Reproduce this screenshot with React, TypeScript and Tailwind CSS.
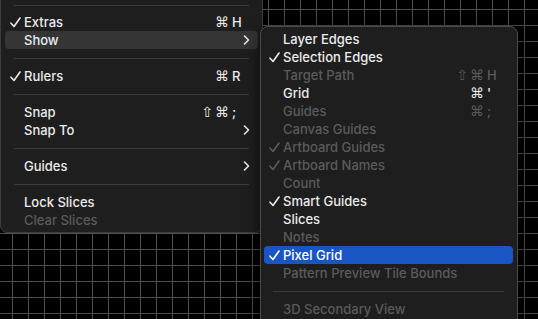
import React from 'react'

type Item =
  | { sep: true }
  | {
      sep?: false
      label: string
      check?: boolean
      disabled?: boolean
      mods?: string
      keyChar?: string
      sub?: boolean
      active?: 'gray' | 'blue'
    }

const mainItems: Item[] = [
  { label: 'Extras', check: true, mods: '⌘', keyChar: 'H' },
  { label: 'Show', sub: true, active: 'gray' },
  { sep: true },
  { label: 'Rulers', check: true, mods: '⌘', keyChar: 'R' },
  { sep: true },
  { label: 'Snap', mods: '⇧⌘', keyChar: ';' },
  { label: 'Snap To', sub: true },
  { sep: true },
  { label: 'Guides', sub: true },
  { sep: true },
  { label: 'Lock Slices' },
  { label: 'Clear Slices', disabled: true },
]

const showItems: Item[] = [
  { label: 'Layer Edges' },
  { label: 'Selection Edges', check: true },
  { label: 'Target Path', disabled: true, mods: '⇧⌘', keyChar: 'H' },
  { label: 'Grid', mods: '⌘', keyChar: "'" },
  { label: 'Guides', disabled: true, mods: '⌘', keyChar: ';' },
  { label: 'Canvas Guides', disabled: true },
  { label: 'Artboard Guides', disabled: true, check: true },
  { label: 'Artboard Names', disabled: true, check: true },
  { label: 'Count', disabled: true },
  { label: 'Smart Guides', check: true },
  { label: 'Slices' },
  { label: 'Notes', disabled: true },
  { label: 'Pixel Grid', check: true, active: 'blue' },
  { label: 'Pattern Preview Tile Bounds', disabled: true },
  { sep: true },
  { label: '3D Secondary View', disabled: true },
]

function Check() {
  return (
    <svg width="11" height="11" viewBox="0 0 11 11" fill="none">
      <path d="M1 6.2 L4 9.5 L10 1" stroke="currentColor" strokeWidth="1.6" strokeLinecap="round" strokeLinejoin="round" />
    </svg>
  )
}

function Chevron() {
  return (
    <svg width="7" height="10" viewBox="0 0 7 10" fill="none">
      <path d="M1.5 1 L5.5 5 L1.5 9" stroke="currentColor" strokeWidth="1.6" strokeLinecap="round" strokeLinejoin="round" />
    </svg>
  )
}

function Row({ item }: { item: Item }) {
  if (item.sep) {
    return (
      <div className="h-[18px] flex items-center px-[9px]">
        <div className="h-px w-full bg-[#3c3c3c]" />
      </div>
    )
  }
  const color = item.disabled ? 'text-[#5b5b5b]' : 'text-[#ebebeb]'
  const bg =
    item.active === 'gray' ? 'bg-[#353535]' : item.active === 'blue' ? 'bg-[#1a55c4] text-white' : ''
  return (
    <div className={`h-[18px] flex items-center rounded-[4px] ${color} ${bg}`}>
      <div className="w-[19px] pl-[5px] flex items-center">{item.check && <Check />}</div>
      <div className="flex-1 text-[13px] leading-[18px] font-medium">{item.label}</div>
      {item.mods && (
        <div className="flex items-center pr-[17px] text-[14px] leading-[18px] font-['DejaVu_Sans',sans-serif]">
          <span className="tracking-[2px]">{item.mods}</span>
          <span className="w-[9px] ml-[1px] text-[13px] font-medium font-['Inter',sans-serif]">{item.keyChar}</span>
        </div>
      )}
      {item.sub && (
        <div className="pr-[8px] flex items-center">
          <Chevron />
        </div>
      )}
    </div>
  )
}

export default function App() {
  return (
    <div className="relative w-[538px] h-[319px] overflow-hidden bg-black font-['Inter',sans-serif] bg-[linear-gradient(to_right,#4e4e4e_1px,transparent_1px),linear-gradient(to_bottom,#4e4e4e_1px,transparent_1px)] [background-size:16px_16px] [background-position:12px_9px]">
      <div className="absolute left-0 top-[-4px] w-[263px] bg-[#1e1e1e] border border-[#3d3d3d] rounded-b-[7px] px-[4px] pb-[3px]">
        <div className="h-[16px] flex items-center px-[9px]">
          <div className="h-px w-full bg-[#3c3c3c]" />
        </div>
        {mainItems.map((it, i) => (
          <Row key={i} item={it} />
        ))}
      </div>
      <div className="absolute left-[260px] top-[26px] w-[258px] bg-[#1e1e1e] border border-[#4a4a4a] rounded-[8px] pl-[3px] pr-[4px] pt-[3px] pb-[8px] shadow-[0_4px_16px_rgba(0,0,0,0.6)]">
        {showItems.map((it, i) => (
          <Row key={i} item={it} />
        ))}
      </div>
    </div>
  )
}
